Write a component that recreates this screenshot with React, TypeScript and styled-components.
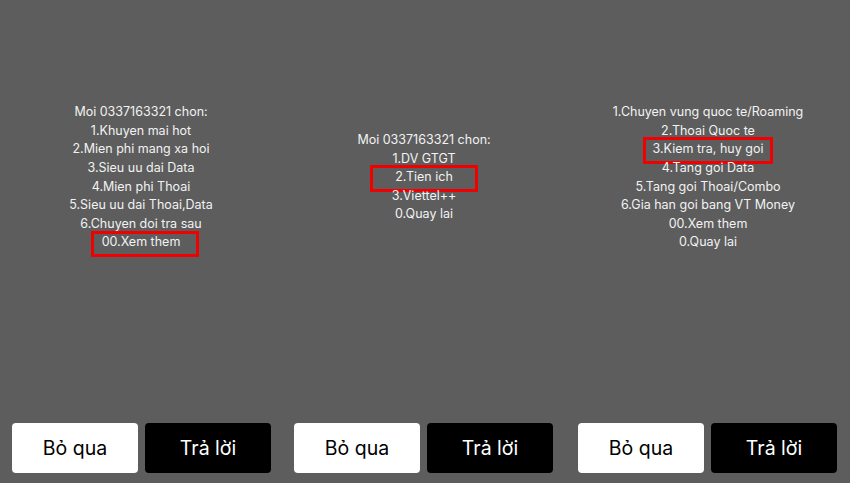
import React from "react";
import styled, { createGlobalStyle } from "styled-components";

const Global = createGlobalStyle`
  html, body { margin: 0; padding: 0; background: #5d5d5d; }
  body { font-family: Inter, "Liberation Sans", sans-serif; }
`;

const Page = styled.div`
  width: 850px;
  height: 483px;
  display: grid;
  grid-template-columns: 282px 284px 284px;
  background: #5d5d5d;
  overflow: hidden;
`;

const Panel = styled.div`
  display: flex;
  flex-direction: column;
  padding: 0 12px 10px 12px;
  box-sizing: border-box;
  height: 483px;
`;

const Message = styled.div`
  flex: 1;
  display: flex;
  flex-direction: column;
  justify-content: center;
  align-items: center;
  padding-bottom: 68px;
`;

const Line = styled.div`
  position: relative;
  color: #f2f2f2;
  font-size: 12.5px;
  line-height: 18.6px;
  text-align: center;
  white-space: nowrap;
`;

const Mark = styled.span<{ $w: number; $h: number; $dx?: number }>`
  position: absolute;
  left: 50%;
  top: 50%;
  width: ${(p) => p.$w}px;
  height: ${(p) => p.$h}px;
  margin-left: ${(p) => -p.$w / 2 + (p.$dx ?? 0)}px;
  margin-top: ${(p) => -p.$h / 2 + 1}px;
  border: 3px solid #f00000;
  box-sizing: border-box;
`;

const Buttons = styled.div`
  display: grid;
  grid-template-columns: 126px 126px;
  gap: 7px;
`;

const Button = styled.div<{ $dark?: boolean }>`
  height: 50px;
  border-radius: 4px;
  background: ${(p) => (p.$dark ? "#000" : "#fff")};
  color: ${(p) => (p.$dark ? "#fff" : "#000")};
  display: flex;
  align-items: center;
  justify-content: center;
  font-size: 19.5px;
`;

type Item = { text: string; mark?: { w: number; h: number; dx?: number } };

const panels: Item[][] = [
  [
    { text: "Moi 0337163321 chon:" },
    { text: "1.Khuyen mai hot" },
    { text: "2.Mien phi mang xa hoi" },
    { text: "3.Sieu uu dai Data" },
    { text: "4.Mien phi Thoai" },
    { text: "5.Sieu uu dai Thoai,Data" },
    { text: "6.Chuyen doi tra sau" },
    { text: "00.Xem them", mark: { w: 108, h: 26, dx: 4 } },
  ],
  [
    { text: "Moi 0337163321 chon:" },
    { text: "1.DV GTGT" },
    { text: "2.Tien ich", mark: { w: 108, h: 27 } },
    { text: "3.Viettel++" },
    { text: "0.Quay lai" },
  ],
  [
    { text: "1.Chuyen vung quoc te/Roaming" },
    { text: "2.Thoai Quoc te" },
    { text: "3.Kiem tra, huy goi", mark: { w: 130, h: 27 } },
    { text: "4.Tang goi Data" },
    { text: "5.Tang goi Thoai/Combo" },
    { text: "6.Gia han goi bang VT Money" },
    { text: "00.Xem them" },
    { text: "0.Quay lai" },
  ],
];

export default function App() {
  return (
    <>
      <Global />
      <Page>
        {panels.map((items, i) => (
          <Panel key={i}>
            <Message>
              {items.map((it, j) => (
                <Line key={j}>
                  {it.text}
                  {it.mark && <Mark $w={it.mark.w} $h={it.mark.h} $dx={it.mark.dx} />}
                </Line>
              ))}
            </Message>
            <Buttons>
              <Button>Bỏ qua</Button>
              <Button $dark>Trả lời</Button>
            </Buttons>
          </Panel>
        ))}
      </Page>
    </>
  );
}
